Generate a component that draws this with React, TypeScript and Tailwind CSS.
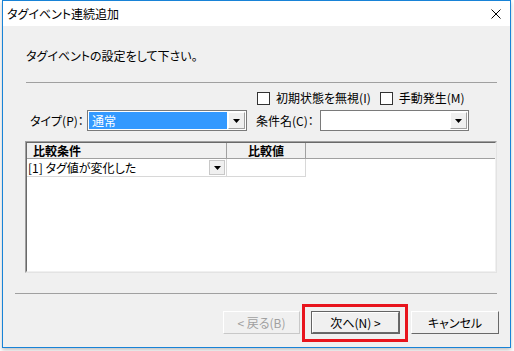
const Arrow = () => (
  <svg width="7" height="4" viewBox="0 0 7 4">
    <path d="M0 0h7L3.5 4z" fill="#000" />
  </svg>
);

const ComboBox = ({ width, value, selected }: { width: string; value?: string; selected?: boolean }) => (
  <div className={`${width} h-[21px] border border-[#7a7a7a] bg-white p-[1px] flex`}>
    <div className={`flex-1 flex items-center pl-[3px] ${selected ? "bg-[#3399ff] text-white" : ""}`}>{value}</div>
    <div className="w-[17px] ml-[1px] bg-[#f0f0f0] border-t border-l border-white border-r border-b border-r-[#a0a0a0] border-b-[#a0a0a0] flex items-center justify-center">
      <Arrow />
    </div>
  </div>
);

const CheckBox = ({ label }: { label: string }) => (
  <div className="flex items-center">
    <div className="w-[13px] h-[13px] border border-[#333] bg-white" />
    <span className="ml-[6px]">{label}</span>
  </div>
);

const Button = ({ label, disabled, main }: { label: string; disabled?: boolean; main?: boolean }) => (
  <div className={`h-[23px] ${main ? "border border-[#646464]" : ""}`}>
    <div
      className={`h-full flex items-center justify-center bg-[#f0f0f0] border border-t-white border-l-white ${
        disabled ? "border-r-[#c8c8c8] border-b-[#c8c8c8] text-[#a0a0a0]" : "border-r-[#696969] border-b-[#696969] text-black"
      }`}
    >
      {label}
    </div>
  </div>
);

export default function App() {
  return (
    <div className="w-[514px] h-[351px] bg-white font-['Noto_Sans_CJK_JP',sans-serif] [font-feature-settings:'palt'] text-[12px] leading-[16px] text-black whitespace-nowrap overflow-hidden">
      <div className="ml-[2px] w-[509px] h-[348px] border border-[#1883d7] flex flex-col shadow-[0_2px_4px_rgba(0,0,0,0.25)]">
        {/* title bar */}
        <div className="h-[25px] bg-white flex items-center pl-[4px] pr-[9px]">
          <span className="flex-1">タグイベント連続追加</span>
          <svg width="10" height="10" viewBox="0 0 10 10">
            <path d="M0.5 0.5L9.5 9.5M9.5 0.5L0.5 9.5" stroke="#000" strokeWidth="1" />
          </svg>
        </div>

        <div className="flex-1 bg-[#f0f0f0] flex flex-col">
          <div className="mt-[22px] ml-[23px]">タグイベントの設定をして下さい。</div>
          <div className="mt-[18px] ml-[23px] w-[471px] h-px bg-[#a0a0a0]" />

          <div className="mt-[7px] ml-[254px] flex gap-[9px]">
            <CheckBox label="初期状態を無視(I)" />
            <CheckBox label="手動発生(M)" />
          </div>

          <div className="mt-[4px] flex items-center">
            <span className="ml-[27px] w-[57px]">タイプ(P)：</span>
            <ComboBox width="w-[160px]" value="通常" selected />
            <span className="ml-[9px] w-[64px]">条件名(C)：</span>
            <ComboBox width="w-[149px]" />
          </div>

          {/* condition grid */}
          <div className="mt-[10px] ml-[22px] w-[472px] h-[132px] bg-white border border-t-[#a0a0a0] border-l-[#a0a0a0] border-r-[#e3e3e3] border-b-[#e3e3e3]">
            <div className="h-full border border-t-[#696969] border-l-[#696969] border-r-[#f0f0f0] border-b-[#f0f0f0] flex flex-col">
              <div className="h-[16px] bg-[#f0f0f0] flex font-bold border-b border-[#a0a0a0]">
                <div className="w-[200px] pl-[6px] border-r border-[#a0a0a0] flex items-center">比較条件</div>
                <div className="w-[79px] border-r border-[#a0a0a0] flex items-center justify-center">比較値</div>
                <div className="flex-1" />
              </div>
              <div className="h-[18px] flex">
                <div className="w-[200px] flex items-center justify-between pl-[1px] pr-[1px] border-r border-b border-[#d8d8d8]">
                  <span>[1] タグ値が変化した</span>
                  <div className="w-[16px] h-[15px] bg-[#f0f0f0] border border-[#c8c8c8] flex items-center justify-center">
                    <Arrow />
                  </div>
                </div>
                <div className="w-[79px] border-r border-b border-[#d8d8d8]" />
              </div>
            </div>
          </div>

          <div className="mt-[20px] ml-[12px] w-[482px] h-px bg-[#a0a0a0]" />

          <div className="mt-[17px] ml-[220px] flex items-start">
            <div className="w-[77px]">
              <Button label="< 戻る(B)" disabled />
            </div>
            <div className="relative ml-[11px] w-[89px]">
              <Button label="次へ(N) >" main />
              <div className="absolute -left-[9px] -top-[7px] w-[106px] h-[38px] border-[3px] border-[#e8141d]" />
            </div>
            <div className="ml-[11px] w-[88px]">
              <Button label="キャンセル" />
            </div>
          </div>
        </div>
      </div>
    </div>
  );
}
